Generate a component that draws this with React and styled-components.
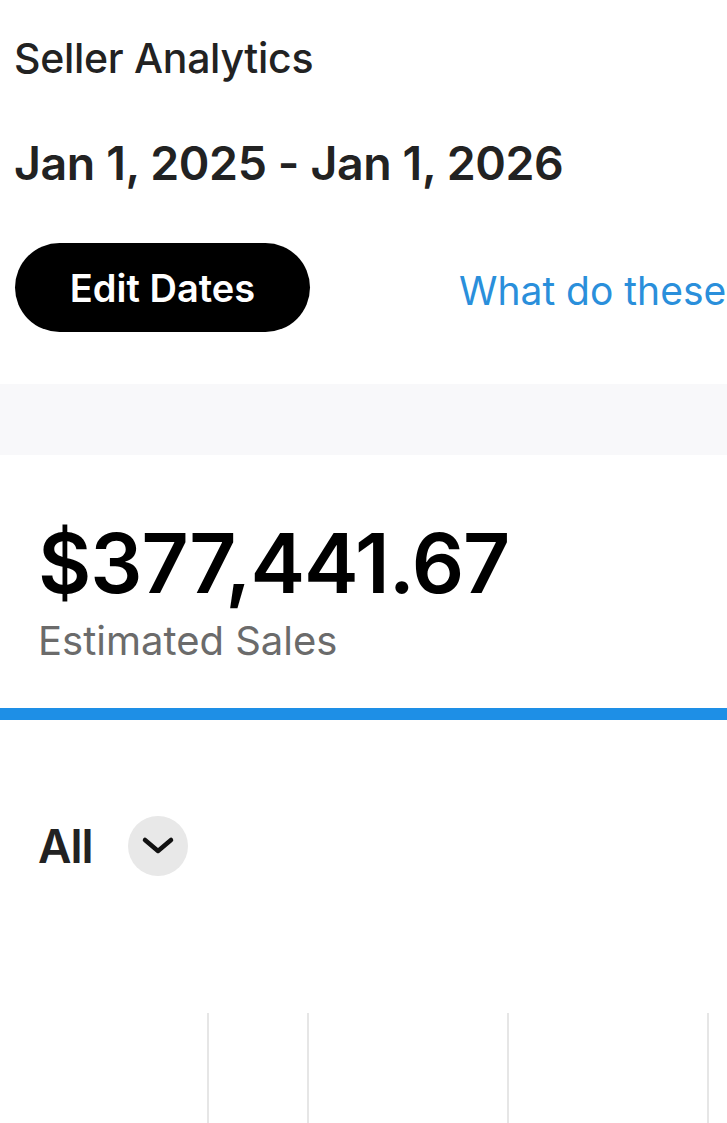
import styled, { createGlobalStyle } from 'styled-components';

const GlobalStyle = createGlobalStyle`
  html, body {
    margin: 0;
    padding: 0;
    background: #ffffff;
  }
  body {
    font-family: Inter, "Noto Sans", "Liberation Sans", sans-serif;
    color: #222222;
    overflow: hidden;
  }
`;

const Page = styled.main`
  width: 727px;
  height: 1123px;
  overflow: hidden;
  background: #ffffff;
`;

const Header = styled.header`
  padding: 34px 0 0 14px;
`;

const Title = styled.h1`
  margin: 0;
  font-size: 41px;
  font-weight: 500;
  line-height: 48px;
  color: #222222;
  letter-spacing: -0.3px;
`;

const DateRange = styled.h2`
  margin: 53px 0 0;
  font-size: 46.5px;
  font-weight: 600;
  line-height: 56px;
  color: #222222;
  letter-spacing: -0.4px;
`;

const Actions = styled.div`
  display: flex;
  align-items: center;
  gap: 149px;
  margin-top: 52px;
  white-space: nowrap;
`;

const PillButton = styled.button`
  flex-shrink: 0;
  width: 295px;
  height: 89px;
  margin-left: 1px;
  padding: 0;
  border: none;
  border-radius: 45px;
  background: #000000;
  color: #ffffff;
  font-family: inherit;
  font-size: 38px;
  font-weight: 600;
`;

const HelpLink = styled.a`
  padding-top: 6px;
  color: #2a8fdb;
  font-size: 39px;
  font-weight: 400;
  text-decoration: none;
`;

const Band = styled.div`
  height: 71px;
  margin-top: 52px;
  background: #f8f8fa;
`;

const Summary = styled.section`
  padding: 67px 0 45px 38px;
`;

const Amount = styled.div`
  font-size: 82px;
  font-weight: 600;
  line-height: 84px;
  color: #000000;
  letter-spacing: -1px;
`;

const Caption = styled.div`
  margin-top: 13px;
  font-size: 40px;
  font-weight: 400;
  line-height: 44px;
  color: #6b6b6b;
`;

const AccentRule = styled.div`
  height: 12px;
  background: #1e8fe6;
`;

const FilterRow = styled.div`
  display: flex;
  align-items: center;
  gap: 35px;
  padding: 96px 0 0 38px;
`;

const FilterLabel = styled.span`
  font-size: 46px;
  font-weight: 600;
  line-height: 60px;
  color: #222222;
  letter-spacing: -1px;
`;

const RoundToggle = styled.button`
  display: flex;
  align-items: center;
  justify-content: center;
  width: 60px;
  height: 60px;
  padding: 0;
  border: none;
  border-radius: 50%;
  background: #e8e8e8;
`;

const Chart = styled.div`
  display: grid;
  grid-template-columns: 209px 100px 200px 200px 1fr;
  height: 250px;
  margin-top: 137px;
`;

const GridCol = styled.div`
  border-right: ${({ $line }) => ($line ? '2px solid #e6e6e6' : 'none')};
`;

function ChevronDown() {
  return (
    <svg width="34" height="22" viewBox="0 0 34 22" fill="none">
      <path
        d="M4 5 L17 16 L30 5"
        stroke="#111111"
        strokeWidth="4.5"
        strokeLinecap="round"
        strokeLinejoin="round"
      />
    </svg>
  );
}

export default function App() {
  return (
    <Page>
      <GlobalStyle />
      <Header>
        <Title>Seller Analytics</Title>
        <DateRange>Jan 1, 2025 - Jan 1, 2026</DateRange>
        <Actions>
          <PillButton>Edit Dates</PillButton>
          <HelpLink href="#">What do these numbers mean?</HelpLink>
        </Actions>
      </Header>

      <Band />

      <Summary>
        <Amount>$377,441.67</Amount>
        <Caption>Estimated Sales</Caption>
      </Summary>
      <AccentRule />

      <FilterRow>
        <FilterLabel>All</FilterLabel>
        <RoundToggle aria-label="Choose filter">
          <ChevronDown />
        </RoundToggle>
      </FilterRow>

      <Chart>
        <GridCol $line />
        <GridCol $line />
        <GridCol $line />
        <GridCol $line />
        <GridCol />
      </Chart>
    </Page>
  );
}
